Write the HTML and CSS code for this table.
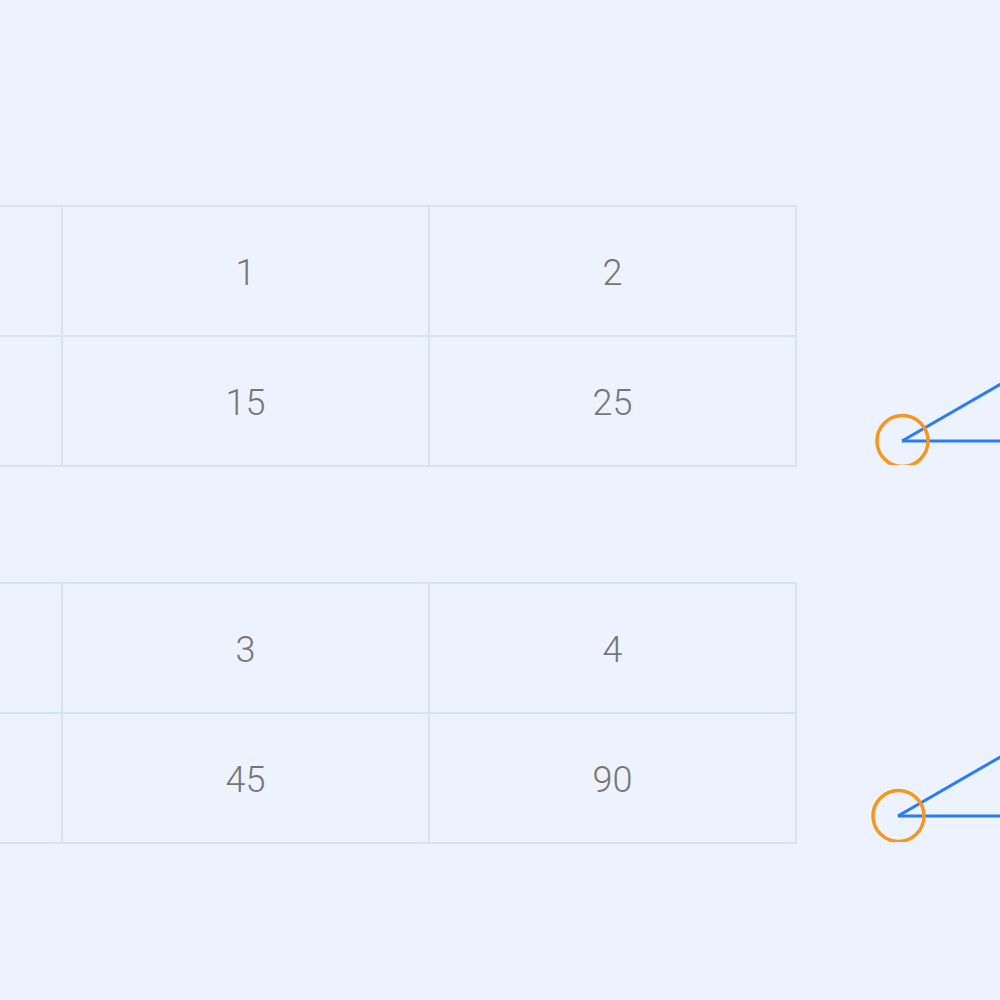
FILE: index.html
```html
<!DOCTYPE html>
<html>
<head>
<meta charset="utf-8">
<link rel="stylesheet" href="styles.css">
</head>
<body>
<div class="page">
  <section class="block">
    <table class="grid">
      <tr><td class="lead"></td><td>1</td><td>2</td></tr>
      <tr><td class="lead"></td><td>15</td><td>25</td></tr>
    </table>
    <svg class="angle" width="204" height="260" viewBox="0 0 204 260">
      <line x1="106" y1="236" x2="206" y2="178.3" class="ray"/>
      <line x1="106" y1="236" x2="206" y2="236" class="ray"/>
      <circle cx="106.5" cy="236" r="25.5" class="vertex"/>
    </svg>
  </section>
  <section class="block">
    <table class="grid">
      <tr><td class="lead"></td><td>3</td><td>4</td></tr>
      <tr><td class="lead"></td><td>45</td><td>90</td></tr>
    </table>
    <svg class="angle" width="204" height="260" viewBox="0 0 204 260">
      <line x1="102" y1="234" x2="206" y2="174" class="ray"/>
      <line x1="102" y1="234" x2="206" y2="234" class="ray"/>
      <circle cx="102.5" cy="234" r="25.5" class="vertex"/>
    </svg>
  </section>
</div>
</body>
</html>
```

FILE: styles.css
```css
html, body {
  margin: 0;
  padding: 0;
  background: #ecf2fe;
  overflow: hidden;
  width: 1000px;
  height: 1000px;
}

.page {
  padding-top: 205px;
  display: flex;
  flex-direction: column;
  gap: 115px;
  margin-left: -100px;
}

.block {
  display: flex;
  align-items: flex-start;
}

.grid {
  border-collapse: collapse;
  font-family: Roboto, "Liberation Sans", sans-serif;
  font-weight: 300;
  font-size: 36px;
  color: #767676;
}

.grid td {
  border: 2px solid #d6e2f6;
  width: 365px;
  height: 124px;
  padding: 4px 0 0;
  text-align: center;
  vertical-align: middle;
}

.grid td.lead {
  width: 159px;
}

.angle {
  display: block;
  flex: none;
  margin-left: -1px;
}

.ray {
  stroke: #2a7bf5;
  stroke-width: 3;
}

.vertex {
  fill: none;
  stroke: #f7961e;
  stroke-width: 3.5;
}
```
